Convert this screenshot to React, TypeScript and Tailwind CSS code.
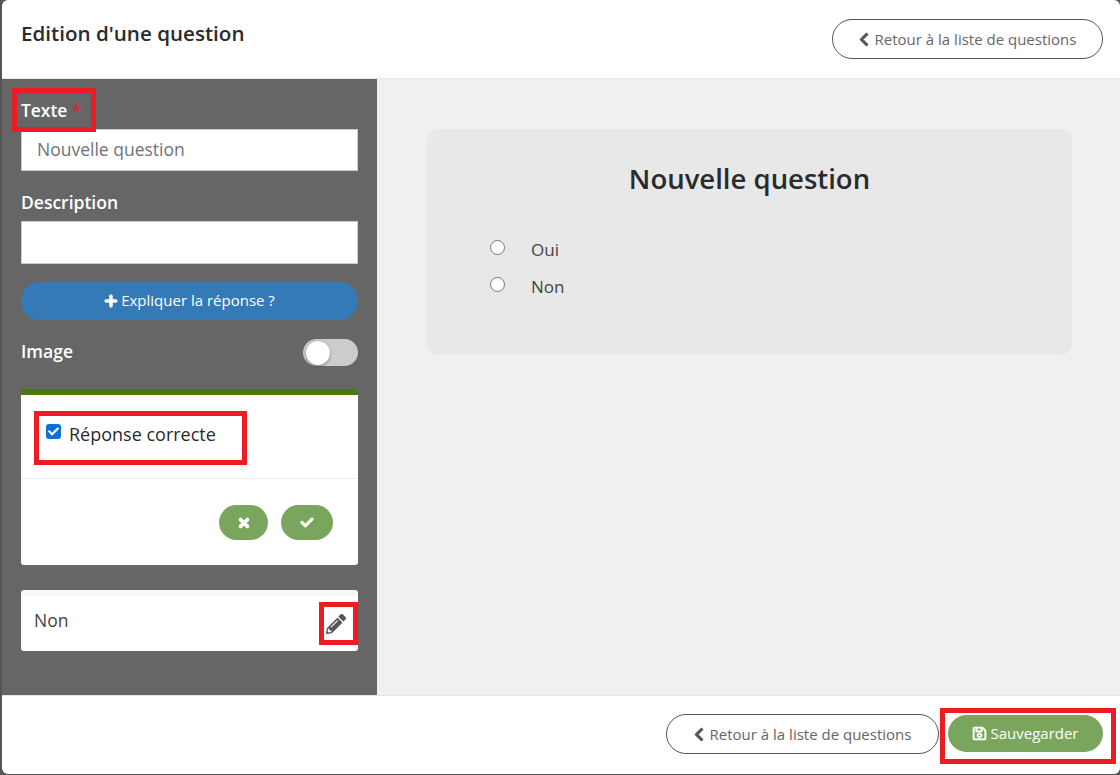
import React from "react";
import { FaChevronLeft, FaPlus, FaTimes, FaCheck, FaPencilAlt, FaRegSave } from "react-icons/fa";

const BackButton = ({ className = "" }: { className?: string }) => (
  <button className={`flex items-center justify-center gap-[6px] h-10 rounded-full border border-[#555] bg-white text-[15px] text-[#666] ${className}`}>
    <FaChevronLeft stroke="currentColor" strokeWidth={30} className="w-[10px] h-[15px] text-[#555]" />
    <span>Retour à la liste de questions</span>
  </button>
);

// Red annotation rectangles drawn over the screenshot
const Mark = ({ className }: { className: string }) => (
  <div className={`absolute border-[5px] border-[#ed1c24] pointer-events-none ${className}`} />
);

export default function App() {
  return (
    <div className="relative w-[1120px] h-[775px] bg-[#555] font-['Open_Sans',sans-serif] overflow-hidden">
      <div className="flex flex-col w-[1118px] h-[774px] ml-[2px] bg-white rounded-[6px] overflow-hidden">
        {/* Header */}
        <div className="flex justify-between h-[79px] shrink-0 border-b border-[#e5e5e5] pl-[19px] pr-[17px]">
          <h1 className="mt-[17px] text-[20.6px] leading-[32px] font-semibold text-[#292b2c]">Edition d'une question</h1>
          <BackButton className="mt-[19px] w-[271px]" />
        </div>

        {/* Body */}
        <div className="flex flex-1 min-h-0">
          <div className="w-[375px] shrink-0 bg-[#666] pl-[19px] pr-[19px] pt-[19px]">
            <label className="block text-[17.4px] leading-[24px] font-semibold text-white">
              Texte <span className="text-[#d9232e]">*</span>
            </label>
            <div className="flex items-center h-[42px] mt-[7px] pb-[1px] bg-white border border-[#ccc] pl-[15px] text-[17.5px] text-[#6f7377]">
              Nouvelle question
            </div>
            <label className="block mt-[19px] text-[17.5px] leading-[24px] font-semibold text-white">Description</label>
            <div className="h-[43px] mt-[7px] bg-white border border-[#ccc]" />
            <button className="flex items-center justify-center gap-[3px] w-full h-[38px] mt-[18px] pb-[1px] rounded-full bg-[#337ab7] text-[15px] text-white">
              <FaPlus stroke="currentColor" strokeWidth={30} className="w-[14px] h-[14px]" />
              <span>Expliquer la réponse ?</span>
            </button>
            <div className="flex items-center justify-between mt-[19px] h-[27px]">
              <span className="-mt-[2px] text-[17.5px] font-semibold text-white">Image</span>
              <div className="flex items-center w-[55px] h-[27px] rounded-full bg-[#ccc] pl-[3px]">
                <div className="w-[24px] h-[24px] rounded-full bg-white shadow-[0_1px_3px_rgba(0,0,0,0.4)]" />
              </div>
            </div>

            {/* Open answer card */}
            <div className="mt-[23px] h-[176px] bg-white border-t-[6px] border-[#4a7a0c] rounded-[3px]">
              <div className="flex items-start h-[84px] border-b border-[#eee] pl-[25px] pt-[27px]">
                <div className="flex items-center justify-center w-[15px] h-[15px] mt-[2px] rounded-[3px] bg-[#0b6fdc]">
                  <FaCheck className="w-[11px] h-[11px] text-white" />
                </div>
                <span className="ml-[8px] text-[18px] leading-[24px] text-[#292b2c]">Réponse correcte</span>
              </div>
              <div className="flex justify-end gap-[13px] pt-[26px] pr-[25px]">
                <button className="flex items-center justify-center w-[49px] h-[35px] rounded-full bg-[#7aa55c]">
                  <FaTimes stroke="currentColor" strokeWidth={40} className="w-[14px] h-[14px] text-white" />
                </button>
                <button className="flex items-center justify-center w-[52px] h-[35px] rounded-full bg-[#7aa55c]">
                  <FaCheck stroke="currentColor" strokeWidth={30} className="w-[14px] h-[13px] text-white" />
                </button>
              </div>
            </div>

            {/* Closed answer */}
            <div className="flex items-center justify-between h-[61px] mt-[25px] bg-white border-t-[6px] border-[#f7f7f7] rounded-[3px] pl-[13px] pr-[12px]">
              <span className="-mt-[6px] text-[17.5px] text-[#444]">Non</span>
              <FaPencilAlt className="w-[20px] h-[20px] text-[#555]" />
            </div>
          </div>

          {/* Preview */}
          <div className="flex-1 bg-[#f0f0f0] pt-[50px] pl-[50px] pr-[48px]">
            <div className="h-[226px] rounded-[12px] bg-[#e8e8e8]">
              <h2 className="pt-[30px] text-center text-[27.5px] leading-[40px] font-semibold text-[#292b2c]">Nouvelle question</h2>
              <div className="flex flex-col gap-[17px] mt-[40px] pl-[63px] text-[17px] leading-[20px] text-[#444]">
                {["Oui", "Non"].map((label) => (
                  <div key={label} className="flex items-start">
                    <div className="w-[15px] h-[15px] mt-[1px] rounded-full bg-white border border-[#767676]" />
                    <span className="ml-[26px] translate-y-[1px]">{label}</span>
                  </div>
                ))}
              </div>
            </div>
          </div>
        </div>

        {/* Footer */}
        <div className="flex items-start justify-end gap-[9px] h-[79px] shrink-0 border-t border-[#e5e5e5] pt-[18px] pr-[17px]">
          <BackButton className="w-[273px]" />
          <button className="flex items-center justify-center gap-[3px] w-[155px] h-[37px] mt-[1px] rounded-full bg-[#7aa55c] text-[15px] text-white">
            <FaRegSave stroke="currentColor" strokeWidth={20} className="w-[15px] h-[15px]" />
            <span>Sauvegarder</span>
          </button>
        </div>
      </div>

      <Mark className="left-[12px] top-[88px] w-[84px] h-[44px]" />
      <Mark className="left-[34px] top-[411px] w-[213px] h-[54px]" />
      <Mark className="left-[319px] top-[602px] w-[39px] h-[43px]" />
      <Mark className="left-[940px] top-[708px] w-[176px] h-[56px]" />
    </div>
  );
}
